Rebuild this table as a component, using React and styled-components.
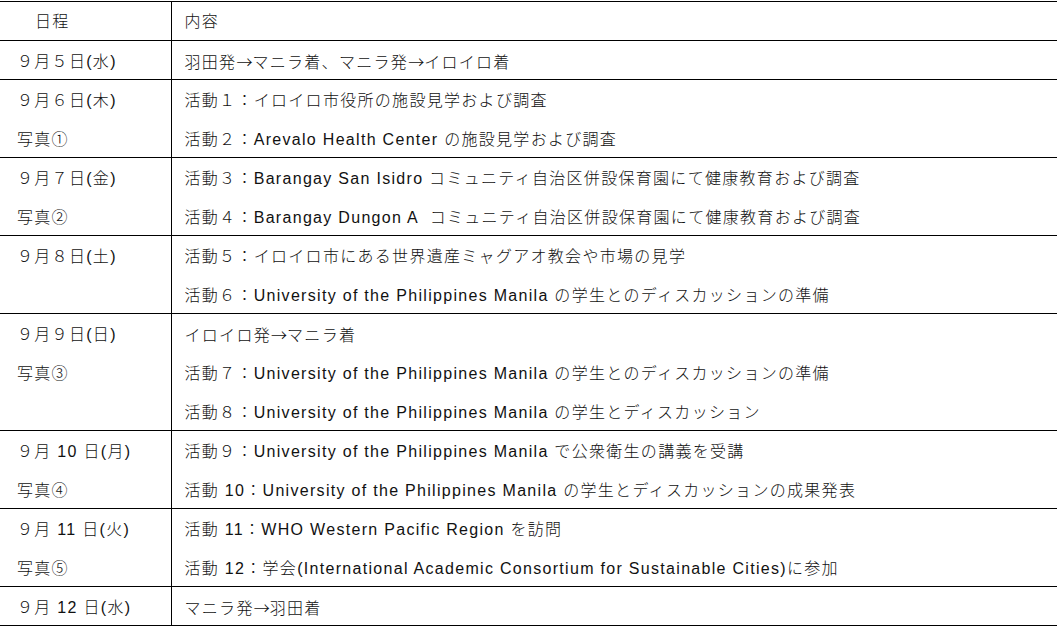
import React from 'react';
import styled, { createGlobalStyle } from 'styled-components';

const GlobalStyle = createGlobalStyle`
    body {
        margin: 0;
        background: #fff;
        font-family: "Liberation Sans", "Noto Sans CJK JP", sans-serif;
        color: #111;
    }
`;

const schedule = [
    { date: ['９月５日(水)'], items: ['羽田発→マニラ着、マニラ発→イロイロ着'] },
    {
        date: ['９月６日(木)', '写真①'],
        items: ['活動１：イロイロ市役所の施設見学および調査', '活動２：Arevalo Health Center の施設見学および調査'],
    },
    {
        date: ['９月７日(金)', '写真②'],
        items: [
            '活動３：Barangay San Isidro コミュニティ自治区併設保育園にて健康教育および調査',
            '活動４：Barangay Dungon A  コミュニティ自治区併設保育園にて健康教育および調査',
        ],
    },
    {
        date: ['９月８日(土)'],
        items: [
            '活動５：イロイロ市にある世界遺産ミャグアオ教会や市場の見学',
            '活動６：University of the Philippines Manila の学生とのディスカッションの準備',
        ],
    },
    {
        date: ['９月９日(日)', '写真③'],
        items: [
            'イロイロ発→マニラ着',
            '活動７：University of the Philippines Manila の学生とのディスカッションの準備',
            '活動８：University of the Philippines Manila の学生とディスカッション',
        ],
    },
    {
        date: ['９月 10 日(月)', '写真④'],
        items: [
            '活動９：University of the Philippines Manila で公衆衛生の講義を受講',
            '活動 10：University of the Philippines Manila の学生とディスカッションの成果発表',
        ],
    },
    {
        date: ['９月 11 日(火)', '写真⑤'],
        items: [
            '活動 11：WHO Western Pacific Region を訪問',
            '活動 12：学会(International Academic Consortium for Sustainable Cities)に参加',
        ],
    },
    { date: ['９月 12 日(水)'], items: ['マニラ発→羽田着'] },
];

// arrows come out tiny in the latin font, so give them the CJK one
const withArrows = (text) =>
    text.split('→').flatMap((part, i) => (i === 0 ? [part] : [<Arrow key={i}>→</Arrow>, part]));

export default function App() {
    return (
        <>
            <GlobalStyle />
            <Table>
                <colgroup>
                    <col style={{ width: 171 }} />
                    <col />
                </colgroup>
                <thead>
                    <tr>
                        <HeadCell $indent>日程</HeadCell>
                        <HeadCell>内容</HeadCell>
                    </tr>
                </thead>
                <tbody>
                    {schedule.map((row, i) => (
                        <tr key={i}>
                            <DateCell>
                                {row.date.map((d, j) => (
                                    <Line key={j}>{d}</Line>
                                ))}
                            </DateCell>
                            <ContentCell>
                                {row.items.map((t, j) => (
                                    <Line key={j}>{withArrows(t)}</Line>
                                ))}
                            </ContentCell>
                        </tr>
                    ))}
                </tbody>
            </Table>
        </>
    );
}

const Table = styled.table`
    width: 1057px;
    margin-top: 1px;
    border-collapse: collapse;
    table-layout: fixed;
    font-size: 16px;
    font-weight: 300;
    letter-spacing: 1.3px;
    border-top: 1px solid #000;
`;

const HeadCell = styled.th`
    font-weight: 300;
    text-align: left;
    height: 36px;
    line-height: 36px;
    padding: 2px 0 0 ${(p) => (p.$indent ? '35px' : '13px')};
    border-bottom: 1px solid #000;
    & + & {
        border-left: 1px solid #000;
    }
    vertical-align: top;
`;

const DateCell = styled.td`
    padding: 0 0 0 17px;
    vertical-align: top;
    border-bottom: 1px solid #000;
`;

const ContentCell = styled.td`
    padding: 0 0 0 13px;
    vertical-align: top;
    border-bottom: 1px solid #000;
    border-left: 1px solid #000;
`;

const Line = styled.div`
    box-sizing: border-box;
    height: 39px;
    padding-top: 2px;
    line-height: 37px;
    white-space: pre;
    &:last-child {
        height: 38px;
    }
`;

const Arrow = styled.span`
    font-family: "Noto Sans CJK JP", sans-serif;
    letter-spacing: 0;
`;
